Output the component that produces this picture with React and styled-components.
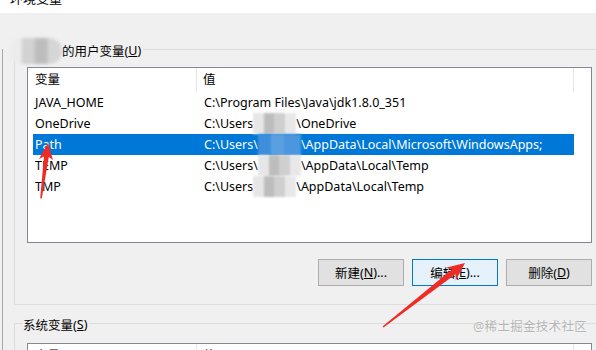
import styled, { createGlobalStyle } from "styled-components";

const rows = [
    { name: "JAVA_HOME", value: "C:\\Program Files\\Java\\jdk1.8.0_351" },
    { name: "OneDrive", value: "C:\\Users", rest: "\\OneDrive", masked: true },
    { name: "Path", value: "C:\\Users\\", rest: "\\AppData\\Local\\Microsoft\\WindowsApps;", masked: true, selected: true },
    { name: "TEMP", value: "C:\\Users\\", rest: "\\AppData\\Local\\Temp", masked: true },
    { name: "TMP", value: "C:\\Users", rest: "\\AppData\\Local\\Temp", masked: true },
];

function App() {
    return (
        <Window>
            <GlobalStyle />
            <TitleBar>
                <Title>环境变量</Title>
            </TitleBar>
            <Frame>
                <Group $padTop={17}>
                    <Legend $left={-5}>
                        <BlurName />
                        的用户变量(<u>U</u>)
                    </Legend>
                    <ListBox $height={176}>
                        <Header>
                            <HeaderCell $width={164}>变量</HeaderCell>
                            <HeaderCell $width={377} $pad={6}>值</HeaderCell>
                        </Header>
                        {rows.map((r) => (
                            <Row key={r.name} $selected={r.selected}>
                                <Cell $width={169}>{r.name}</Cell>
                                <Cell>
                                    {r.value}
                                    {r.masked && <Mosaic $selected={r.selected} />}
                                    {r.rest}
                                </Cell>
                            </Row>
                        ))}
                    </ListBox>
                    <Buttons>
                        <Button>
                            新建(<u>N</u>)...
                        </Button>
                        <Button $focused>
                            编辑(<u>E</u>)...
                        </Button>
                        <Button>
                            删除(<u>D</u>)
                        </Button>
                    </Buttons>
                </Group>
                <Group $padTop={19} $gap={18}>
                    <Legend $left={8}>
                        系统变量(<u>S</u>)
                    </Legend>
                    <ListBox $height={60}>
                        <Header>
                            <HeaderCell $width={164}>变量</HeaderCell>
                            <HeaderCell $width={377} $pad={6}>值</HeaderCell>
                        </Header>
                    </ListBox>
                </Group>
            </Frame>
            <Watermark>@稀土掘金技术社区</Watermark>
            <Arrows width="596" height="350" viewBox="0 0 596 350">
                <polygon points="48,143 53,160 48.8,157 41.8,198.5 40.2,198.3 44,156.5 39,159" />
                <polygon points="465,263 455.7,280.4 455.8,274 383.5,327.6 382.5,326.4 452.1,269.3 445.9,267.8" />
            </Arrows>
        </Window>
    );
}

export default App;

const GlobalStyle = createGlobalStyle`
    body {
        margin: 0;
        background: #f0f0f0;
        overflow: hidden;
        font-family: "Noto Sans", "Noto Sans CJK SC", sans-serif;
        font-size: 12.5px;
        color: #000;
    }
`;

const Window = styled.div`
    position: relative;
    width: 596px;
    height: 350px;
    overflow: hidden;
    background: #f0f0f0;
`;

const TitleBar = styled.div`
    height: 13px;
    background: #fff;
    overflow: hidden;
`;

const Title = styled.div`
    margin: -11px 0 0 10px;
    font-size: 13px;
    line-height: 18px;
`;

const Frame = styled.div`
    margin-left: 2px;
    padding-left: 11px;
    height: 337px;
    border-left: 1px solid #a8a8a8;
`;

const Group = styled.div`
    position: relative;
    box-sizing: border-box;
    width: 591px;
    margin-top: ${(p) => p.$gap || 36}px;
    padding: ${(p) => p.$padTop}px 12px 18px 12px;
    border: 1px solid #dcdcdc;
`;

const Legend = styled.div`
    position: absolute;
    top: -10px;
    left: ${(p) => p.$left}px;
    display: flex;
    align-items: center;
    height: 20px;
    padding-right: 2px;
    background: #f0f0f0;
    white-space: nowrap;
`;

const BlurName = styled.span`
    display: inline-block;
    width: 52px;
    height: 26px;
    margin-top: 2px;
    border-radius: 12px 14px 14px 12px;
    background: linear-gradient(90deg, #ececec 0 20%, #d2d2d2 25% 45%, #bdbdbd 50% 70%, #d6d6d6 75% 100%);
    filter: blur(1.5px);
`;

const ListBox = styled.div`
    box-sizing: border-box;
    height: ${(p) => p.$height}px;
    padding-left: 5px;
    border: 1px solid #828790;
    background: #fff;
    overflow: hidden;
`;

const Header = styled.div`
    display: flex;
    height: 24px;
`;

const HeaderCell = styled.div`
    box-sizing: border-box;
    width: ${(p) => p.$width}px;
    padding-left: ${(p) => p.$pad || 2}px;
    border-right: 1px solid #e5e5e5;
    line-height: 24px;
`;

const Row = styled.div`
    display: flex;
    width: 541px;
    height: 21px;
    line-height: 21px;
    white-space: nowrap;
    background: ${(p) => (p.$selected ? "#0078d7" : "transparent")};
    color: ${(p) => (p.$selected ? "#fff" : "#000")};
`;

const Cell = styled.div`
    box-sizing: border-box;
    width: ${(p) => (p.$width ? p.$width + "px" : "auto")};
    padding-left: 2px;
    display: flex;
    align-items: center;
`;

const Mosaic = styled.span`
    display: inline-block;
    width: 43px;
    height: 21px;
    background: ${(p) =>
        p.$selected
            ? "linear-gradient(90deg, #3d8fdc 0 30%, #5aa0e0 30% 60%, #4b96de 60% 100%)"
            : "linear-gradient(90deg, #e6e6e6 0 25%, #bdbdbd 25% 50%, #cfcfcf 50% 75%, #e8e8e8 75% 100%)"};
    filter: blur(1px);
`;

const Buttons = styled.div`
    display: flex;
    justify-content: flex-end;
    gap: 8px;
    margin-top: 16px;
`;

const Button = styled.div`
    box-sizing: border-box;
    width: 86px;
    height: 27px;
    display: flex;
    align-items: center;
    justify-content: center;
    background: ${(p) => (p.$focused ? "#e5f1fb" : "#e1e1e1")};
    border: 1px solid ${(p) => (p.$focused ? "#0078d7" : "#adadad")};
`;

const Watermark = styled.div`
    position: absolute;
    right: 9px;
    top: 316px;
    font-size: 12.5px;
    letter-spacing: 0.3px;
    color: #b5b5b5;
    text-shadow: 0 0 2px #fff;
`;

const Arrows = styled.svg`
    position: absolute;
    left: 0;
    top: 0;
    pointer-events: none;
    fill: #ee2b25;
`;
